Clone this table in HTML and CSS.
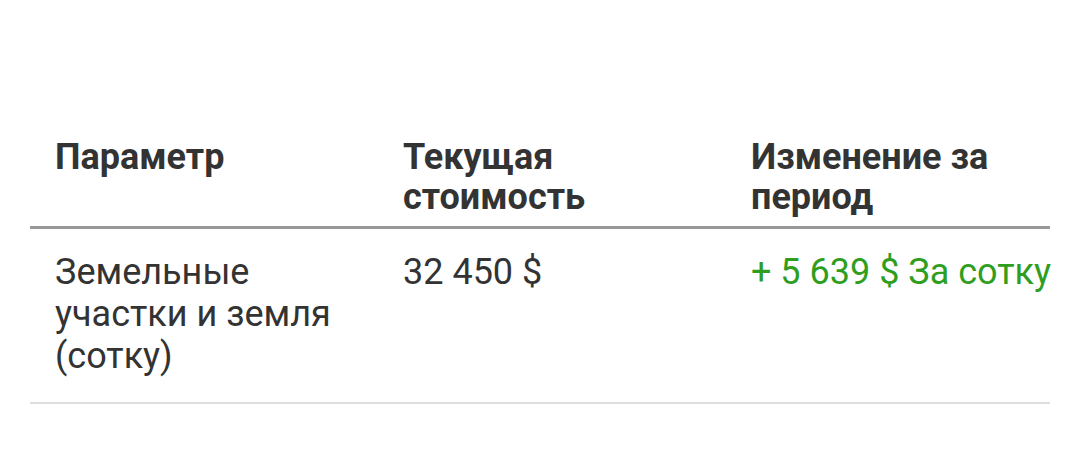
FILE: index.html
```html
<!DOCTYPE html>
<html lang="ru">
<head>
<meta charset="utf-8">
<link rel="stylesheet" href="styles.css">
</head>
<body>
<div class="page">
  <div class="table">
    <div class="row head">
      <div class="cell">Параметр</div>
      <div class="cell">Текущая стоимость</div>
      <div class="cell">Изменение за период</div>
    </div>
    <div class="row body">
      <div class="cell">Земельные участки и земля (сотку)</div>
      <div class="cell">32 450 $</div>
      <div class="cell up">+ 5 639 $ За сотку</div>
    </div>
  </div>
</div>
</body>
</html>
```
FILE: styles.css
```css
html, body {
  margin: 0;
  padding: 0;
  background: #fff;
}
.page {
  padding: 137px 30px 0 30px;
  font-family: Roboto, "Noto Sans", sans-serif;
  color: #333;
}
.table {
  width: 1020px;
}
.row {
  display: grid;
  grid-template-columns: 348px 348px 1fr;
}
.cell {
  padding-left: 25px;
  font-size: 36px;
}
.head .cell {
  line-height: 40px;
}
.head {
  font-weight: 700;
  border-bottom: 3px solid #999;
  padding-bottom: 9px;
}
.body {
  padding-top: 22px;
  padding-bottom: 25px;
  border-bottom: 2px solid #ddd;
}
.body .cell {
  line-height: 42px;
  padding-right: 20px;
}
.up {
  color: #2f9e1f;
  white-space: nowrap;
}
```
